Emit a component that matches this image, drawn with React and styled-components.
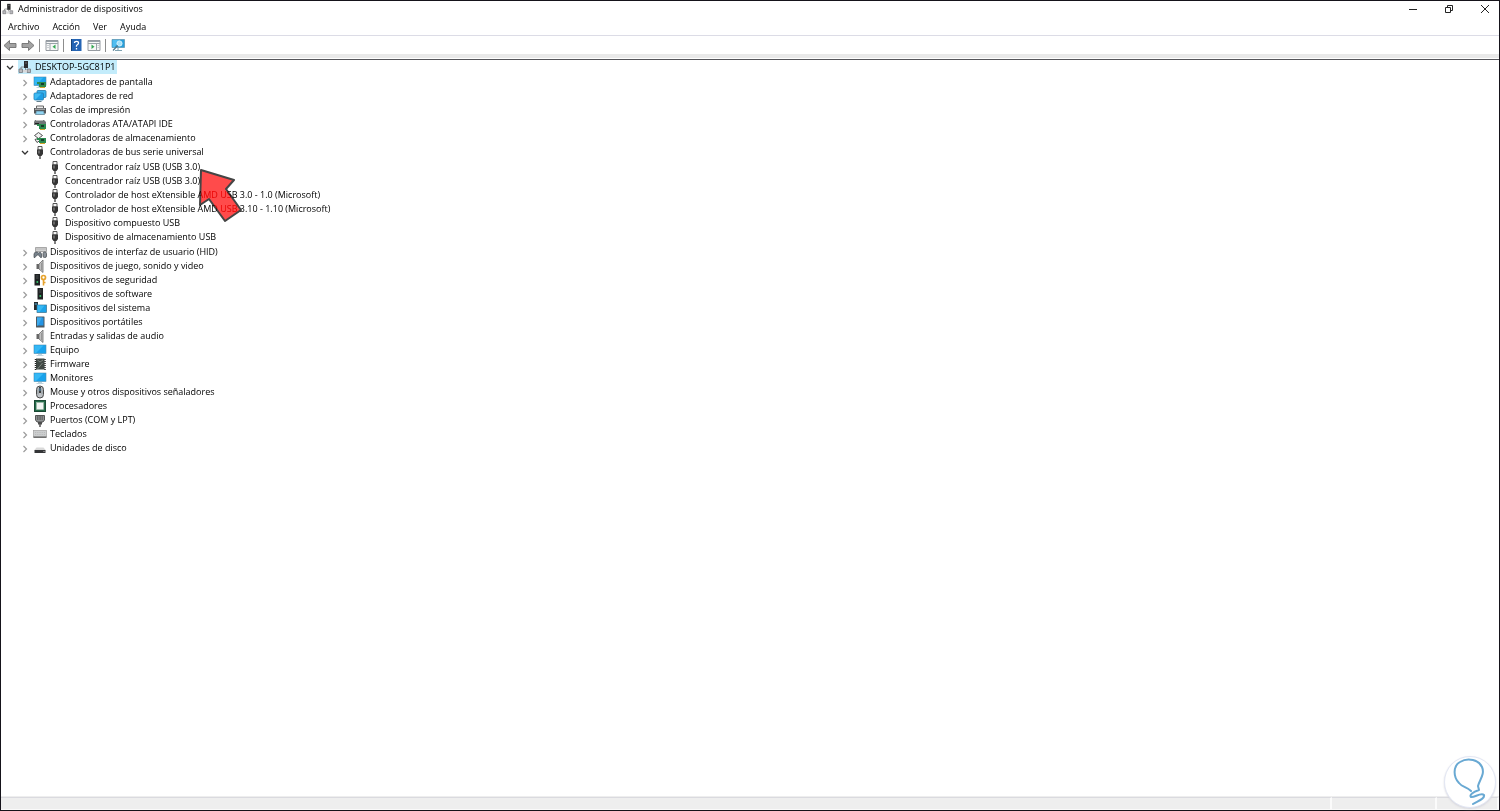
import React, { useState } from 'react';
import styled, { createGlobalStyle } from 'styled-components';

const GlobalStyle = createGlobalStyle`
  *, *::before, *::after { box-sizing: border-box; }
  body { margin: 0; background: #fff; }
  button { font: inherit; color: inherit; background: none; border: 0; padding: 0; margin: 0; }
  ul { list-style: none; margin: 0; padding: 0; }
`;

const Window = styled.div`
  position: relative;
  display: flex;
  flex-direction: column;
  min-height: 100vh;
  border: 1px solid #15131a;
  background: #fff;
  color: #000;
  font: 500 9px/14px "Open Sans", "Noto Sans", sans-serif;
`;

const TitleBar = styled.header`
  display: flex;
  align-items: center;
  height: 16px;
  padding-left: 1px;
  gap: 4px;
`;

const Title = styled.h1`
  flex: 1;
  margin: 0;
  font: inherit;
`;

const WindowControls = styled.div`
  display: flex;
  gap: 8px;
`;

const WindowButton = styled.button`
  display: flex;
  align-items: center;
  justify-content: center;
  width: 28px;
  height: 14px;
`;

const MenuBar = styled.nav`
  display: flex;
  align-items: center;
  gap: 13px;
  height: 19px;
  padding: 2px 0 0 7px;
  border-bottom: 1px solid #dcdce6;
`;

const MenuItem = styled.button`
  line-height: 14px;
`;

const Toolbar = styled.div`
  display: flex;
  align-items: center;
  gap: 4px;
  height: 18px;
  padding-left: 2px;
`;

const ToolButton = styled.button`
  display: flex;
  width: 14px;
  height: 14px;
`;

const Separator = styled.span`
  width: 1px;
  height: 13px;
  margin-right: 1px;
  background: #8d8d8d;
`;

const Strip = styled.div`
  height: 4px;
  background: #e9e9e9;
`;

const Content = styled.main`
  flex: 1;
  margin-top: 1px;
  border-top: 1px solid #55555a;
`;

const Tree = styled.ul`
  padding-left: 1px;
`;

const Branch = styled.ul`
  margin: 1px 0;
  padding-left: 15px;
`;

const Node = styled.li`
  position: relative;
`;

const Row = styled.div`
  display: flex;
  align-items: center;
  height: 14px;
`;

const Expander = styled.button`
  display: flex;
  align-items: center;
  justify-content: center;
  width: 16px;
  height: 14px;
`;

const Spacer = styled.span`
  width: 16px;
`;

const Item = styled.span`
  display: flex;
  align-items: center;
  height: 14px;
  padding-right: 2px;
  gap: 3px;
  white-space: nowrap;
  background: ${(p) => (p.$selected ? '#c3ecfb' : 'transparent')};
`;

const Pointer = styled.svg`
  position: absolute;
  left: 180px;
  top: 17px;
  pointer-events: none;
  mix-blend-mode: ${(p) => p.$blend || 'normal'};
`;

const StatusBar = styled.footer`
  display: flex;
  height: 14px;
  padding-top: 1px;
  background: #eeeeee;
  border-bottom: 1px solid #fafafa;
`;

const StatusCell = styled.div`
  flex: ${(p) => (p.$width ? `0 0 ${p.$width}` : '1')};
  border-top: 1px solid #dadadf;
  border-right: 2px solid #fbfbfb;
`;

const Badge = styled.div`
  position: absolute;
  right: 3px;
  bottom: 2px;
  width: 52px;
  height: 52px;
  border: 1px solid #e3e7f4;
  border-radius: 50%;
  background: #fff;
  box-shadow: 0 1px 2px #d8d8de;
`;

const Svg = ({ children, size = 14, view = '0 0 14 14' }) => (
  <svg width={size} height={size} viewBox={view} fill="none" aria-hidden="true">
    {children}
  </svg>
);

const monitor = (
  <>
    <rect x="1" y="2" width="12" height="8.500" fill="#18a2ec" stroke="#4f8dad" strokeWidth=".6" />
    <path d="M1.500 2.500h9L3 10H1.500z" fill="#36b8f5" />
    <path d="M5 11.500h4M3.500 12.500h7" stroke="#b3cad6" strokeWidth=".8" />
  </>
);

const chip = (
  <>
    <path d="M4 7h9v5H6V9H4z" fill="#2b8a4f" />
    <path d="M8 8h3v2H8z" fill="#173c2a" />
    <path d="M7 12.500h5" stroke="#d3a52d" />
  </>
);

const speaker = (
  <>
    <path d="M3.500 5h2.500v5H3.500z" fill="#666" />
    <path d="M6 5l4-4v12.500L6 10z" fill="#c0c0c0" stroke="#6e6e6e" strokeWidth=".8" />
    <path d="M8.500 4v7" stroke="#8d8d8d" strokeWidth=".8" />
  </>
);

const tower = (
  <>
    <rect x="4.500" y="1" width="5.500" height="11.500" fill="#1f2223" />
    <path d="M6 3h2.500M6 5h2.500" stroke="#565b5d" strokeWidth=".8" />
    <circle cx="7.300" cy="9" r="1" fill="#35c46a" />
  </>
);

const glyphs = {
  computer: (
    <>
      <rect x="6" y="1" width="4" height="7" fill="#2c2c2e" />
      <path d="M7 3h2" stroke="#888" strokeWidth=".7" />
      <path d="M1 9h3.500v3.500H1zM9 9h3.500v3.500H9z" fill="#b9b9bd" stroke="#6e6e72" strokeWidth=".7" />
      <path d="M3 9V7h3M7.500 8v2" stroke="#777" strokeWidth=".8" />
      <path d="M5 10h4v2.500H5z" fill="#d8d8da" />
    </>
  ),
  display: (
    <>
      {monitor}
      {chip}
    </>
  ),
  network: (
    <>
      <rect x="4" y="1.500" width="9" height="7" rx="1" fill="#37b2ef" stroke="#2579a9" strokeWidth=".8" />
      <rect x="1" y="4" width="9.500" height="7" rx="1" fill="#1c9ee5" stroke="#2a7fae" strokeWidth=".8" />
      <path d="M1.500 4.500h7l-6 6h-1z" fill="#40bbf3" />
      <path d="M3.500 12.500h5" stroke="#61808e" />
    </>
  ),
  printer: (
    <>
      <path d="M3.500 3h7v2.500h-7z" fill="#ededed" stroke="#555" strokeWidth=".9" />
      <path d="M1 5h12v5.500h-2V8H3v2.500H1z" fill="#55585a" />
      <path d="M2 6.200h10" stroke="#d0d0d0" strokeWidth=".9" />
      <path d="M3.500 8h7l1 3.500h-9z" fill="#8fd3f1" stroke="#476879" strokeWidth=".6" />
    </>
  ),
  ata: (
    <>
      <path d="M2 3h9l2 2v3H1V5z" fill="#717577" />
      <path d="M3 3.500h7" stroke="#bbb" />
      <path d="M2 6.500h4" stroke="#222" />
      {chip}
    </>
  ),
  storage: (
    <>
      <path d="M5.500 1.500l4 3-4 3-4-3zM2 8.500l3-1 2 2-3 2z" fill="#f0f0f0" stroke="#444" strokeWidth=".9" />
      {chip}
    </>
  ),
  usb: (
    <>
      <path d="M5 1.500h4V5H5z" fill="#f4f4f4" stroke="#444" strokeWidth=".9" />
      <path d="M4 4.500h6V9l-1.500 2h-3L4 9z" fill="#353535" />
      <path d="M6 5.500v3" stroke="#a5a5a5" strokeWidth=".9" />
      <path d="M7 11v3" stroke="#555" strokeWidth="1.500" />
    </>
  ),
  hid: (
    <>
      <path d="M2.500 2.500h11v4h-11z" fill="#d3d3d3" stroke="#8c8c8c" strokeWidth=".7" />
      <path d="M3.500 4h9" stroke="#888" strokeWidth=".7" strokeDasharray="1 1" />
      <path d="M1 12.500V9Q1.500 6.500 4 7l1.500 1Q8 6 8.500 9v3.500H7.500L5.500 10H4L2 12.500z" fill="#77828b" stroke="#454b50" strokeWidth=".7" />
      <rect x="10" y="7" width="3.500" height="5.500" rx="1.500" fill="#8a9198" stroke="#4c5154" strokeWidth=".8" />
    </>
  ),
  speaker,
  security: (
    <>
      <g transform="translate(-3 0)">{tower}</g>
      <circle cx="10.500" cy="4.500" r="2" stroke="#e6a32e" strokeWidth="1.700" />
      <path d="M10.500 6.500v6M11 9.500h1.500" stroke="#e6a32e" strokeWidth="1.600" />
    </>
  ),
  software: tower,
  system: (
    <>
      <rect x="1" y="1" width="4" height="8" fill="#252a2c" />
      <path d="M2 3h2" stroke="#777" strokeWidth=".7" />
      <rect x="4" y="4" width="9.500" height="7.500" fill="#1ba3e9" stroke="#38718d" strokeWidth=".7" />
      <path d="M4.500 4.500h7l-5 6.500h-2z" fill="#38b7f2" />
      <path d="M1.500 3h3" stroke="#36a9df" strokeWidth=".8" />
    </>
  ),
  portable: (
    <>
      <rect x="3" y="1.500" width="8.500" height="11" rx=".5" fill="#4d5961" />
      <path d="M4 2.500h6.500v8H4z" fill="#2494e4" />
      <path d="M4 2.500h5l-4 8H4z" fill="#3dabed" />
    </>
  ),
  monitor,
  firmware: (
    <>
      <rect x="3" y="1.500" width="8.500" height="11" fill="#414945" />
      <path d="M2.500 2v11M12 2v11" stroke="#252525" strokeDasharray="1 1" strokeWidth="1.500" />
      <path d="M4.500 3l2.500 2 3-2M4.500 12l5-6" stroke="#8a938d" strokeWidth=".8" />
    </>
  ),
  mouse: (
    <>
      <rect x="3.500" y="1" width="7" height="12" rx="3.500" fill="#bfc3c7" stroke="#494949" />
      <path d="M7 2v6" stroke="#333" strokeWidth="1.800" />
      <path d="M5 3.500v6M9 3.500v6" stroke="#777e84" strokeWidth=".7" />
      <path d="M7 3v3" stroke="#549fcc" strokeWidth=".9" />
    </>
  ),
  cpu: (
    <>
      <rect x="1.500" y="1.500" width="11" height="11" fill="#246b49" stroke="#1a4934" />
      <rect x="3.500" y="3.500" width="7" height="7" fill="#f2f5f3" stroke="#a6bcb0" strokeWidth=".6" />
    </>
  ),
  port: (
    <>
      <path d="M2.500 2.500h9V7l-1.500 2H4L2.500 7z" fill="#909394" stroke="#4a4a4a" strokeWidth=".9" />
      <path d="M4 4h6M4 6h6" stroke="#383838" strokeWidth="1" strokeDasharray="1 .6" />
      <path d="M5 9h4v2.500H5z" fill="#4d4d4d" />
      <path d="M7 11v3" stroke="#555" strokeWidth="1.500" />
    </>
  ),
  keyboard: (
    <>
      <rect x=".5" y="3.500" width="13" height="6.500" fill="#cdcfd0" stroke="#a0a0a0" strokeWidth=".7" />
      <path d="M2 5.500h10M2 7.500h10" stroke="#b2b2b2" strokeWidth=".7" strokeDasharray="1 .8" />
      <path d="M.5 10.200h13" stroke="#555" strokeWidth="1.200" />
    </>
  ),
  disk: (
    <>
      <path d="M3.500 6.500h7l2.500 3H1z" fill="#dadada" />
      <path d="M1.500 9h11v3h-11z" fill="#333537" />
      <circle cx="11" cy="10.500" r=".6" fill="#ccc" />
    </>
  ),
  back: <path d="M1 7.500L6.500 2.500v3H13v4H6.500v3z" fill="#a3a3a3" stroke="#707070" strokeWidth=".9" />,
  forward: <path d="M13 7.500L7.500 2.500v3H1v4h6.500v3z" fill="#a3a3a3" stroke="#707070" strokeWidth=".9" />,
  panelLeft: (
    <>
      <path d="M1 2.500h12v10H1z" fill="#f7f7f7" stroke="#8a9096" strokeWidth=".9" />
      <path d="M1 3.500h12M1 5.500h12M5 5.500v7" stroke="#9aa2a9" />
      <path d="M2 7.500h2M2 9.500h2" stroke="#bcc3c8" strokeWidth=".8" />
      <path d="M10.500 6.500v4.500L7.500 8.800z" fill="#35a853" />
    </>
  ),
  panelRight: (
    <>
      <path d="M1 2.500h12v10H1z" fill="#f7f7f7" stroke="#8a9096" strokeWidth=".9" />
      <path d="M1 3.500h12M1 5.500h12M9.500 5.500v7" stroke="#9aa2a9" />
      <path d="M10.500 7.500h2M10.500 9.500h2" stroke="#bcc3c8" strokeWidth=".8" />
      <path d="M4.500 6.500v4.500l3-2.200z" fill="#35a853" />
    </>
  ),
  help: (
    <>
      <rect x="2" y="1" width="10.500" height="12" fill="#2464b4" />
      <path d="M2.500 1v12" stroke="#174377" />
      <path d="M5.500 5Q5.500 3.300 7.500 3.300T9.500 5Q9.500 6 8.300 6.800T7.500 8.800M7.500 10v1.500" stroke="#fff" strokeWidth="1.300" />
    </>
  ),
  scan: (
    <>
      <path d="M1 1.500h12.500v8H1z" fill="#279fdb" stroke="#5791ae" strokeWidth=".7" />
      <path d="M1.500 2h8l-6 7h-2z" fill="#4fbdf0" />
      <path d="M4 12.500h7M7 10v2" stroke="#7ea1b0" />
      <circle cx="8.500" cy="5.500" r="2.600" fill="#a5e0f8" stroke="#e5f6fd" strokeWidth=".8" />
      <path d="M6.800 7.500L2 12.500" stroke="#4f788c" strokeWidth="1.200" />
    </>
  ),
};

const Chevron = ({ open }) => (
  <Svg size={10} view="0 0 10 10">
    {open ? (
      <path d="M2 4l3 3 3-3" stroke="#333" strokeWidth="1.300" />
    ) : (
      <path d="M3.500 3l3 3-3 3" stroke="#9b9b9b" strokeWidth="1.200" />
    )}
  </Svg>
);

const usbDevices = [
  'Concentrador raíz USB (USB 3.0)',
  'Concentrador raíz USB (USB 3.0)',
  'Controlador de host eXtensible AMD USB 3.0 - 1.0 (Microsoft)',
  'Controlador de host eXtensible AMD USB 3.10 - 1.10 (Microsoft)',
  'Dispositivo compuesto USB',
  'Dispositivo de almacenamiento USB',
].map((label) => ({ icon: 'usb', label }));

const categories = [
  { icon: 'display', label: 'Adaptadores de pantalla' },
  { icon: 'network', label: 'Adaptadores de red' },
  { icon: 'printer', label: 'Colas de impresión' },
  { icon: 'ata', label: 'Controladoras ATA/ATAPI IDE' },
  { icon: 'storage', label: 'Controladoras de almacenamiento' },
  { icon: 'usb', label: 'Controladoras de bus serie universal', children: usbDevices, marked: true },
  { icon: 'hid', label: 'Dispositivos de interfaz de usuario (HID)' },
  { icon: 'speaker', label: 'Dispositivos de juego, sonido y video' },
  { icon: 'security', label: 'Dispositivos de seguridad' },
  { icon: 'software', label: 'Dispositivos de software' },
  { icon: 'system', label: 'Dispositivos del sistema' },
  { icon: 'portable', label: 'Dispositivos portátiles' },
  { icon: 'speaker', label: 'Entradas y salidas de audio' },
  { icon: 'monitor', label: 'Equipo' },
  { icon: 'firmware', label: 'Firmware' },
  { icon: 'monitor', label: 'Monitores' },
  { icon: 'mouse', label: 'Mouse y otros dispositivos señaladores' },
  { icon: 'cpu', label: 'Procesadores' },
  { icon: 'port', label: 'Puertos (COM y LPT)' },
  { icon: 'keyboard', label: 'Teclados' },
  { icon: 'disk', label: 'Unidades de disco' },
];

const arrowPath = 'M4 8L37 18L29 27L44 48L28 59L12 37L3 43Z';

// Two blended layers: the first turns dark text red, the second tints the white around it.
const Arrow = () => (
  <>
    <Pointer $blend="lighten" width="48" height="62" viewBox="0 0 48 62" aria-hidden="true">
      <path d={arrowPath} fill="#f00000" />
    </Pointer>
    <Pointer $blend="multiply" width="48" height="62" viewBox="0 0 48 62" aria-hidden="true">
      <path d={arrowPath} fill="#ff4b4b" stroke="#454545" strokeWidth="2" strokeLinejoin="round" />
    </Pointer>
  </>
);

function TreeNode({ node, leaf, selected }) {
  const [open, setOpen] = useState(Boolean(node.children));
  return (
    <Node>
      <Row>
        {leaf ? (
          <Spacer />
        ) : (
          <Expander aria-label={node.label} aria-expanded={open} onClick={() => setOpen(!open)}>
            <Chevron open={open && Boolean(node.children)} />
          </Expander>
        )}
        <Item $selected={selected}>
          <Svg>{glyphs[node.icon]}</Svg>
          {node.label}
        </Item>
      </Row>
      {open && node.children && (
        <Branch>
          {node.children.map((child, i) => (
            <TreeNode key={i} node={child} leaf={node.marked} />
          ))}
        </Branch>
      )}
      {node.marked && <Arrow />}
    </Node>
  );
}

const Tool = ({ icon, label }) => (
  <ToolButton aria-label={label}>
    <Svg>{glyphs[icon]}</Svg>
  </ToolButton>
);

export default function App() {
  return (
    <>
      <GlobalStyle />
      <Window>
        <TitleBar>
          <Svg size={12}>{glyphs.computer}</Svg>
          <Title>Administrador de dispositivos</Title>
          <WindowControls>
            <WindowButton aria-label="Minimizar">
              <Svg size={10} view="0 0 10 10"><path d="M1 5.500h8" stroke="#222" /></Svg>
            </WindowButton>
            <WindowButton aria-label="Restaurar">
              <Svg size={10} view="0 0 10 10">
                <path d="M1.500 3.500h5v5h-5zM3.500 3.500v-2h5v5h-2" stroke="#222" />
              </Svg>
            </WindowButton>
            <WindowButton aria-label="Cerrar">
              <Svg size={10} view="0 0 10 10"><path d="M1 1l8 8M9 1L1 9" stroke="#222" /></Svg>
            </WindowButton>
          </WindowControls>
        </TitleBar>
        <MenuBar>
          {['Archivo', 'Acción', 'Ver', 'Ayuda'].map((m) => (
            <MenuItem key={m}>{m}</MenuItem>
          ))}
        </MenuBar>
        <Toolbar>
          <Tool icon="back" label="Atrás" />
          <Tool icon="forward" label="Adelante" />
          <Separator />
          <Tool icon="panelLeft" label="Mostrar árbol" />
          <Separator />
          <Tool icon="help" label="Ayuda" />
          <Tool icon="panelRight" label="Mostrar panel" />
          <Separator />
          <Tool icon="scan" label="Buscar cambios de hardware" />
        </Toolbar>
        <Strip />
        <Content>
          <Tree>
            <TreeNode
              node={{ icon: 'computer', label: 'DESKTOP-5GC81P1', children: categories }}
              selected
            />
          </Tree>
        </Content>
        <StatusBar>
          <StatusCell />
          <StatusCell $width="105px" />
          <StatusCell $width="62px" />
        </StatusBar>
        <Badge>
          <svg width="50" height="50" viewBox="0 0 50 50" fill="none" aria-hidden="true">
            <path
              d="M26 34C22 30 17 30 14 26C8 20 8 9 15 5C23 0 34 3 37 10C40 17 35 22 33 29L34 33C28 35 24 38 26 40C29 41 36 35 39 38C40 42 33 44 28 47"
              stroke="#69a9d3"
              strokeWidth="2"
              strokeLinecap="round"
              strokeLinejoin="round"
            />
          </svg>
        </Badge>
      </Window>
    </>
  );
}
